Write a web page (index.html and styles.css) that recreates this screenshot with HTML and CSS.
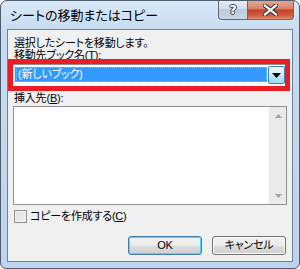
FILE: index.html
```html
<!DOCTYPE html>
<html lang="ja">
<head>
    <meta charset="UTF-8">
    <title>シートの移動またはコピー</title>
    <link rel="stylesheet" href="styles.css">
</head>
<body>
    <div class="window">
        <div class="titlebar">
            <span class="title">シートの移動またはコピー</span>
            <div class="caption-buttons">
                <span class="cap help">?</span>
                <span class="cap close">
                    <svg width="15" height="12" viewBox="0 0 15 12">
                        <path d="M2 1.5 L13 10.5 M13 1.5 L2 10.5" stroke="#3b3b3b" stroke-width="4.5" stroke-linecap="square"/>
                        <path d="M2 1.5 L13 10.5 M13 1.5 L2 10.5" stroke="#ffffff" stroke-width="2.2" stroke-linecap="square"/>
                    </svg>
                </span>
            </div>
        </div>
        <div class="client">
            <p class="line">選択したシートを移動します。</p>
            <p class="line">移動先ブック名(<u>T</u>):</p>
            <div class="highlight">
                <div class="combo">
                    <div class="combo-value"><span class="focus">(新しいブック)</span></div>
                    <div class="combo-btn">
                        <svg width="9" height="5" viewBox="0 0 9 5"><path d="M0 0 H9 L4.5 5 Z" fill="#000"/></svg>
                    </div>
                </div>
            </div>
            <p class="line">挿入先(<u>B</u>):</p>
            <div class="listbox">
                <div class="list-area"></div>
                <div class="scrollbar">
                    <svg width="7" height="4" viewBox="0 0 7 4"><path d="M0 4 H7 L3.5 0 Z" fill="#a0a0a0"/></svg>
                    <svg width="7" height="4" viewBox="0 0 7 4"><path d="M0 0 H7 L3.5 4 Z" fill="#a0a0a0"/></svg>
                </div>
            </div>
            <div class="check-row">
                <span class="checkbox"></span>
                <span>コピーを作成する(<u>C</u>)</span>
            </div>
            <div class="buttons">
                <button class="btn default">OK</button>
                <button class="btn">キャンセル</button>
            </div>
        </div>
    </div>
</body>
</html>
```

FILE: styles.css
```css
* {
    box-sizing: border-box;
}

body {
    margin: 0;
    background: #ffffff;
    font-family: "Liberation Sans", "Noto Sans CJK JP", sans-serif;
    font-feature-settings: "palt";
    font-size: 11px;
    letter-spacing: -0.2px;
    color: #000;
}

.window {
    width: 300px;
    height: 269px;
    display: flex;
    flex-direction: column;
    border: 1px solid #4e5c6b;
    border-radius: 7px 7px 6px 6px;
    background: linear-gradient(180deg, #d9e8f7 0%, #c5dbf1 12%, #bcd4ed 100%);
    overflow: hidden;
}

.titlebar {
    height: 28px;
    display: flex;
    align-items: flex-start;
    flex-shrink: 0;
}

.title {
    padding: 7px 0 0 9px;
    font-size: 13px;
    letter-spacing: 0;
    line-height: 15px;
    color: #000;
}

.caption-buttons {
    display: flex;
    margin: -1px 5px 0 auto;
}

.cap {
    height: 20px;
    display: flex;
    align-items: center;
    justify-content: center;
    border: 1px solid #5d6b7a;
    border-top: none;
}

.help {
    width: 29px;
    border-radius: 0 0 0 4px;
    border-right: none;
    background: linear-gradient(180deg, #e6eef7 0%, #d3dfeb 45%, #bccbdb 50%, #c7d6e4 100%);
    color: #fff;
    font-family: "DejaVu Sans", sans-serif;
    font-weight: bold;
    font-size: 13px;
    text-shadow: 0 0 1px #333, 1px 0 0 #444, -1px 0 0 #444, 0 1px 0 #444, 0 -1px 0 #444;
}

.close {
    width: 47px;
    border-radius: 0 0 4px 0;
    background: linear-gradient(180deg, #e8a996 0%, #d9836c 45%, #c4432a 52%, #cf5a3e 80%, #e08b6c 100%);
}

.client {
    flex: 1;
    margin: 0 6px 6px;
    border: 1px solid #6f8194;
    background: #f0f0f0;
    display: flex;
    flex-direction: column;
}

.line {
    margin: 0;
    padding-left: 6px;
    line-height: 12px;
    height: 12px;
}

.line:first-child {
    margin-top: 7px;
}

u {
    text-decoration: underline;
    text-underline-offset: 1px;
}

.highlight {
    margin: -2px 2px 0 0;
    border: 5px solid #ed1c24;
    height: 32px;
}

.combo {
    height: 22px;
    display: flex;
    background: #fff;
    border-top: 1px solid #8e8f8f;
    padding: 2px 0 1px 2px;
}

.combo-value {
    flex: 1;
    background: #3399ff;
    margin-bottom: 2px;
    padding: 0 0 0 1px;
    height: 15px;
}

.focus {
    display: block;
    height: 15px;
    border: 1px dotted #f2a63a;
    color: #fff;
    line-height: 13px;
    padding-left: 1px;
}

.combo-btn {
    width: 17px;
    height: 18px;
    margin: -1px 0 0 1px;
    border: 1px solid #3c7fb1;
    border-radius: 2px;
    background: linear-gradient(180deg, #eaf6fd 0%, #d9f0fc 45%, #bee6fd 50%, #a7d9f5 100%);
    display: flex;
    align-items: center;
    justify-content: center;
}

.highlight + .line {
    margin-top: 1px;
}

.listbox {
    margin: 2px 5px 0 5px;
    height: 99px;
    border: 1px solid #8e8f8f;
    background: #fff;
    display: flex;
}

.list-area {
    flex: 1;
}

.scrollbar {
    width: 17px;
    background: #eaeaea;
    border-left: 1px solid #e6e6e6;
    display: flex;
    flex-direction: column;
    justify-content: space-between;
    align-items: center;
    padding: 7px 0 6px;
}

.check-row {
    margin: 5px 0 0 6px;
    display: flex;
    align-items: center;
    gap: 3px;
    height: 13px;
    line-height: 13px;
}

.checkbox {
    width: 13px;
    height: 13px;
    border: 1px solid #8e8f8f;
    background: linear-gradient(135deg, #dcdcdc 0%, #f4f4f4 100%);
    box-shadow: inset 0 0 0 1px #f4f4f4;
}

.buttons {
    margin: 13px 6px 0 0;
    display: flex;
    justify-content: flex-end;
    gap: 10px;
}

.btn {
    width: 74px;
    height: 19px;
    padding: 0;
    border: 1px solid #707070;
    border-radius: 3px;
    background: linear-gradient(180deg, #f2f2f2 0%, #ebebeb 50%, #dddddd 51%, #cfcfcf 100%);
    box-shadow: inset 0 0 0 1px #fcfcfc;
    font-family: "Liberation Sans", "Noto Sans CJK JP", sans-serif;
    font-feature-settings: "palt";
    font-size: 11px;
    letter-spacing: -0.2px;
    line-height: 15px;
    color: #000;
}

.btn.default {
    border-color: #3c7fb1;
    box-shadow: inset 0 0 0 1px #48d8fb;
}
```
